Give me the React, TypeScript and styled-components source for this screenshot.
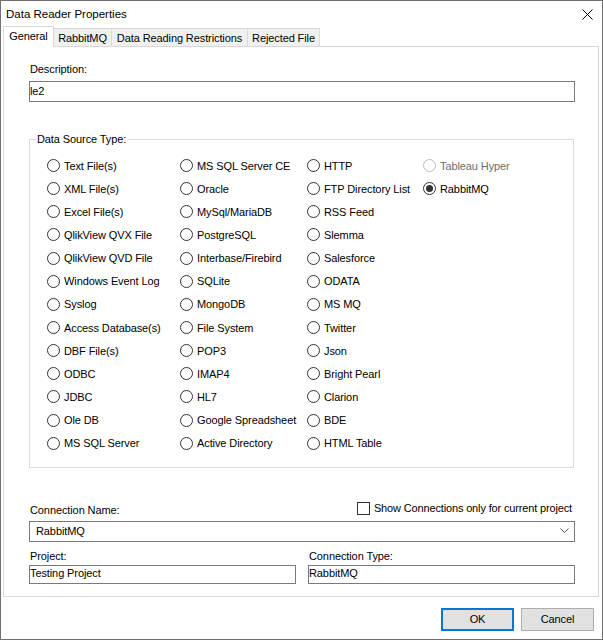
import React from "react";
import styled, { createGlobalStyle } from "styled-components";

const Global = createGlobalStyle`
  html, body { margin: 0; padding: 0; background: #ffffff; }
  body {
    font-family: "Liberation Sans", Arial, sans-serif;
    font-size: 11px;
    letter-spacing: -0.1px;
    color: #000000;
  }
  * { box-sizing: border-box; }
`;

const Window = styled.div`
  width: 603px;
  height: 640px;
  border: 1px solid #707070;
  background: #ffffff;
  display: flex;
  flex-direction: column;
`;

const TitleBar = styled.div`
  height: 25px;
  display: flex;
  align-items: center;
  justify-content: space-between;
  padding: 0 9px 0 5px;
  font-size: 11.5px;
  letter-spacing: 0;
  color: #000;
`;

const CloseIcon = styled.svg`
  width: 11px;
  height: 11px;
  margin-top: 1px;
`;

const TabStrip = styled.div`
  height: 20px;
  display: flex;
  align-items: flex-end;
  padding-left: 2px;
  position: relative;
  z-index: 1;
`;

const Tab = styled.div<{ $active?: boolean; $w: number }>`
  width: ${(p) => p.$w}px;
  height: ${(p) => (p.$active ? 21 : 18)}px;
  margin-bottom: ${(p) => (p.$active ? -1 : 0)}px;
  margin-left: ${(p) => (p.$active ? 0 : -1)}px;
  border: 1px solid #d9d9d9;
  border-bottom: none;
  background: ${(p) => (p.$active ? "#ffffff" : "#f0f0f0")};
  display: flex;
  align-items: center;
  justify-content: center;
  padding-bottom: ${(p) => (p.$active ? 2 : 0)}px;
  &:first-child { margin-left: 0; }
`;

const Panel = styled.div`
  margin-left: 2px;
  width: 596px;
  height: 551px;
  border: 1px solid #d9d9d9;
  padding: 16px 23px 0 25px;
  display: flex;
  flex-direction: column;
`;

const Label = styled.div`
  line-height: 13px;
  height: 13px;
  padding-left: 1px;
  white-space: nowrap;
`;

const TextBox = styled.div<{ $h: number }>`
  height: ${(p) => p.$h}px;
  border: 1px solid #7a7a7a;
  display: flex;
  align-items: center;
  padding-left: 0px;
  padding-bottom: 2px;
  white-space: nowrap;
  background: #fff;
`;

const DescLabel = styled(Label)`
  margin-bottom: 5px;
`;

const GroupBox = styled.fieldset`
  margin: 31px 1px 0 0;
  padding: 8px 0 12px 0;
  border: 1px solid #dcdcdc;
  min-width: 0;
`;

const Legend = styled.legend`
  margin-left: 6px;
  padding: 0 1px;
  line-height: 13px;
`;

const RadioGrid = styled.div`
  display: grid;
  grid-auto-flow: column;
  grid-template-rows: repeat(13, 23.15px);
  grid-template-columns: 133px 127px 116px auto;
  padding-left: 17px;
`;

const RadioItem = styled.div<{ $disabled?: boolean }>`
  display: flex;
  align-items: center;
  gap: 4px;
  white-space: nowrap;
  color: ${(p) => (p.$disabled ? "#6d6d6d" : "#000")};
`;

const Circle = styled.span<{ $disabled?: boolean; $checked?: boolean }>`
  width: 13px;
  height: 13px;
  border-radius: 50%;
  border: 1px solid ${(p) => (p.$disabled ? "#bcbcbc" : "#333333")};
  background: #fff;
  display: flex;
  align-items: center;
  justify-content: center;
  flex: none;
  &::after {
    content: "";
    display: ${(p) => (p.$checked ? "block" : "none")};
    width: 7px;
    height: 7px;
    border-radius: 50%;
    background: #333333;
  }
`;

const ConnRow = styled.div`
  margin-top: 34px;
  height: 15px;
  display: flex;
  justify-content: space-between;
  align-items: flex-start;
`;

const ConnLabel = styled(Label)`
  margin-top: 2px;
`;

const CheckWrap = styled.div`
  display: flex;
  align-items: center;
  gap: 4px;
  margin-right: 3px;
  white-space: nowrap;
  letter-spacing: -0.15px;
`;

const CheckBox = styled.span`
  width: 13px;
  height: 13px;
  border: 1px solid #333333;
  background: #fff;
  flex: none;
`;

const Combo = styled.div`
  margin-top: 4px;
  height: 21px;
  border: 1px solid #7a7a7a;
  display: flex;
  align-items: center;
  justify-content: space-between;
  padding: 0 5px 1px 6px;
`;

const Chevron = styled.svg`
  width: 9px;
  height: 6px;
`;

const TwoCols = styled.div`
  margin-top: 8px;
  display: grid;
  grid-template-columns: 267px 267px;
  column-gap: 12px;
`;

const Field = styled.div`
  display: flex;
  flex-direction: column;
  gap: 2px;
`;

const Footer = styled.div`
  flex: 1;
  display: flex;
  justify-content: flex-end;
  align-items: flex-start;
  padding: 11px 8px 0 0;
  gap: 7px;
`;

const Button = styled.div<{ $default?: boolean }>`
  width: 73px;
  height: 23px;
  background: #e1e1e1;
  border: ${(p) => (p.$default ? "2px solid #0078d7" : "1px solid #adadad")};
  display: flex;
  align-items: center;
  justify-content: center;
  padding-bottom: 1px;
`;

const sources: { label: string; disabled?: boolean; checked?: boolean }[] = [
  "Text File(s)", "XML File(s)", "Excel File(s)", "QlikView QVX File", "QlikView QVD File",
  "Windows Event Log", "Syslog", "Access Database(s)", "DBF File(s)", "ODBC", "JDBC", "Ole DB",
  "MS SQL Server",
  "MS SQL Server CE", "Oracle", "MySql/MariaDB", "PostgreSQL", "Interbase/Firebird", "SQLite",
  "MongoDB", "File System", "POP3", "IMAP4", "HL7", "Google Spreadsheet", "Active Directory",
  "HTTP", "FTP Directory List", "RSS Feed", "Slemma", "Salesforce", "ODATA", "MS MQ", "Twitter",
  "Json", "Bright Pearl", "Clarion", "BDE", "HTML Table",
].map((l) => ({ label: l }));
sources.push({ label: "Tableau Hyper", disabled: true });
sources.push({ label: "RabbitMQ", checked: true });

export default function App() {
  return (
    <>
      <Global />
      <Window>
        <TitleBar>
          <span>Data Reader Properties</span>
          <CloseIcon viewBox="0 0 11 11">
            <path d="M0.5 0.5 L10.5 10.5 M10.5 0.5 L0.5 10.5" stroke="#000" strokeWidth="1" fill="none" />
          </CloseIcon>
        </TitleBar>
        <TabStrip>
          <Tab $active $w={51}>General</Tab>
          <Tab $w={59}>RabbitMQ</Tab>
          <Tab $w={137}>Data Reading Restrictions</Tab>
          <Tab $w={73}>Rejected File</Tab>
        </TabStrip>
        <Panel>
          <DescLabel>Description:</DescLabel>
          <TextBox $h={21}>le2</TextBox>
          <GroupBox>
            <Legend>Data Source Type:</Legend>
            <RadioGrid>
              {sources.map((s) => (
                <RadioItem key={s.label} $disabled={s.disabled}>
                  <Circle $disabled={s.disabled} $checked={s.checked} />
                  <span>{s.label}</span>
                </RadioItem>
              ))}
            </RadioGrid>
          </GroupBox>
          <ConnRow>
            <ConnLabel>Connection Name:</ConnLabel>
            <CheckWrap>
              <CheckBox />
              <span>Show Connections only for current project</span>
            </CheckWrap>
          </ConnRow>
          <Combo>
            <span>RabbitMQ</span>
            <Chevron viewBox="0 0 9 6">
              <path d="M0.5 0.5 L4.5 4.5 L8.5 0.5" stroke="#555" strokeWidth="1" fill="none" />
            </Chevron>
          </Combo>
          <TwoCols>
            <Field>
              <Label>Project:</Label>
              <TextBox $h={19}>Testing Project</TextBox>
            </Field>
            <Field>
              <Label>Connection Type:</Label>
              <TextBox $h={19}>RabbitMQ</TextBox>
            </Field>
          </TwoCols>
        </Panel>
        <Footer>
          <Button $default>OK</Button>
          <Button>Cancel</Button>
        </Footer>
      </Window>
    </>
  );
}
